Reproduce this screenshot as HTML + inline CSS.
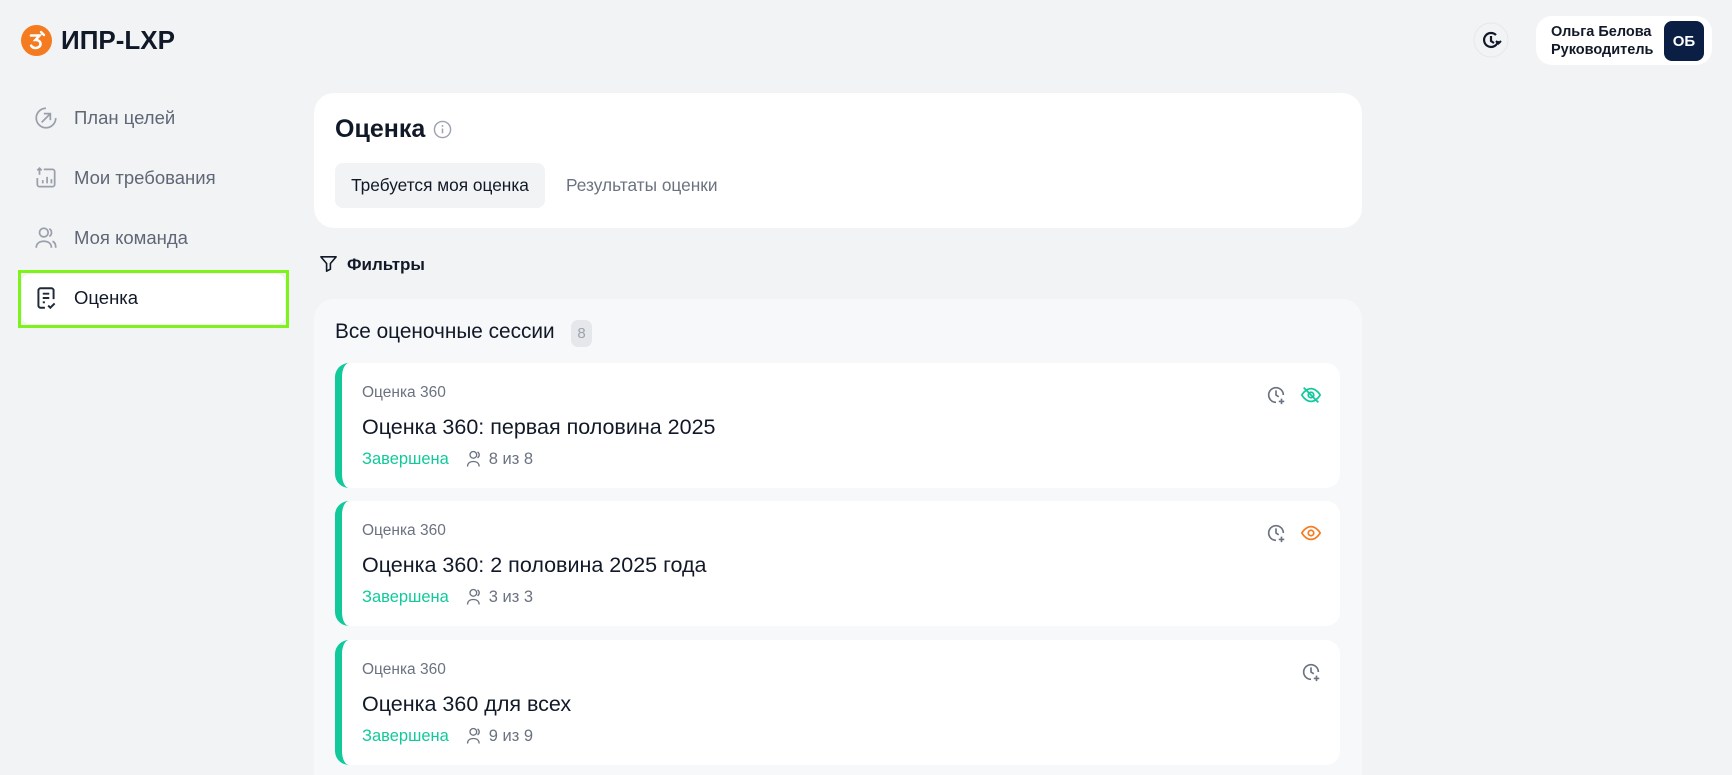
<!DOCTYPE html>
<html><head><meta charset="utf-8"><style>
*{box-sizing:border-box;margin:0;padding:0}
html{width:1732px;height:775px;overflow:hidden}
body{width:1732px;height:775px;overflow:hidden;background:#f2f3f5;font-family:"Liberation Sans","Noto Sans CJK SC",sans-serif;color:#111827;position:relative}
.abs{position:absolute}
.nav{position:absolute;left:33px;display:flex;align-items:center;font-size:18.5px;color:#5f6675}
.nav svg{width:26px;height:26px;margin-right:15px}
.card{position:absolute;left:335px;width:1005px;height:125px;background:#fff;border-radius:14px;border-left:7px solid #12c99b}
.card .k{position:absolute;left:20px;top:21px;font-size:15.5px;color:#6b7280}
.card .t{position:absolute;left:20px;top:52px;font-size:21.5px;color:#111827}
.card .s{position:absolute;left:20px;top:86px;font-size:16.5px;color:#12c99b;display:flex;align-items:center}
.card .s span{color:#6b7280;margin-left:6px}
</style></head><body>
<svg class="abs" style="left:21px;top:25px" width="31" height="31" viewBox="0 0 31 31"><circle cx="15.5" cy="15.5" r="15.5" fill="#f47b20"/><path d="M10 10.5h8.5l-4 4.5c3 0 5 1.6 5 4s-2.3 4-5 4c-2 0-3.5-1-4.3-2.3" fill="none" stroke="#fff" stroke-width="2.6" stroke-linecap="round"/><path d="M20 7l3 3" stroke="#fff" stroke-width="2.4" stroke-linecap="round"/></svg>
<div class="abs" style="left:61px;top:25px;font-size:26px;font-weight:600;color:#111827">ИПР-LXP</div>

<div class="nav" style="top:105px"><svg viewBox="0 0 24 24" fill="none" stroke="#9aa0ab" stroke-width="1.6"><path d="M21 12a9 9 0 1 1-9-9"/><path d="M8 16l8-8M10 8h6v6"/></svg>План целей</div>
<div class="nav" style="top:165px"><svg viewBox="0 0 24 24" fill="none" stroke="#9aa0ab" stroke-width="1.6"><path d="M6 3v6M4 5l2-2 2 2M10 4h8a2 2 0 0 1 2 2v12a2 2 0 0 1-2 2H6a2 2 0 0 1-2-2v-6M9 17v-3M13 17v-6M17 17v-4"/></svg>Мои требования</div>
<div class="nav" style="top:225px"><svg viewBox="0 0 24 24" fill="none" stroke="#9aa0ab" stroke-width="1.6"><circle cx="10" cy="7" r="4"/><path d="M3 21c0-4 3-6 7-6s7 2 7 6M15 3.5a4 4 0 0 1 0 7M18 15c2 .7 3 2.5 3 6"/></svg>Моя команда</div>
<div class="abs" style="left:18px;top:270px;width:271px;height:58px;border:3px solid #7df31a;background:#f2f3f5"><div style="position:absolute;inset:1px;background:#fff;border-radius:8px"></div></div>
<div class="nav" style="top:285px;color:#111827"><svg viewBox="0 0 24 24" fill="none" stroke="#1f2937" stroke-width="1.8"><path d="M11 21H7a2 2 0 0 1-2-2V5a2 2 0 0 1 2-2h10a2 2 0 0 1 2 2v8M9 8h6M9 12h6M9 16h2M14 19l2 2 4-4"/></svg>Оценка</div>

<svg class="abs" style="left:1473px;top:22px" width="36" height="36" viewBox="0 0 36 36"><circle cx="18" cy="18" r="17" fill="#f2f3f5" stroke="#e5e7eb"/><path d="M25 19a7 7 0 1 1-2-6" fill="none" stroke="#111827" stroke-width="2.2"/><path d="M18 14v5l3 2" fill="none" stroke="#111827" stroke-width="2.2"/><path d="M23 19l2.5 2.5 2.5-2.5" fill="none" stroke="#111827" stroke-width="2"/></svg>
<div class="abs" style="left:1536px;top:16px;width:176px;height:49px;background:#fff;border-radius:16px"></div>
<div class="abs" style="left:1551px;top:23px;font-size:14.5px;font-weight:600;line-height:18px;color:#111827">Ольга Белова<br>Руководитель</div>
<div class="abs" style="left:1664px;top:21px;width:40px;height:40px;background:#0b1f45;border-radius:8px;color:#fff;font-weight:700;font-size:15px;display:flex;align-items:center;justify-content:center">ОБ</div>

<div class="abs" style="left:314px;top:93px;width:1048px;height:135px;background:#fff;border-radius:20px"></div>
<div class="abs" style="left:335px;top:115px;font-size:25px;font-weight:700">Оценка</div>
<svg class="abs" style="left:433px;top:120px" width="19" height="19" viewBox="0 0 20 20"><circle cx="10" cy="10" r="8.5" fill="none" stroke="#9ca3af" stroke-width="1.5"/><path d="M10 9v5" stroke="#9ca3af" stroke-width="1.6"/><circle cx="10" cy="6.3" r="1" fill="#9ca3af"/></svg>
<div class="abs" style="left:335px;top:163px;width:210px;height:45px;background:#f2f3f5;border-radius:8px;font-size:17.3px;display:flex;align-items:center;justify-content:center;color:#111827">Требуется моя оценка</div>
<div class="abs" style="left:566px;top:175px;font-size:17.3px;color:#6b7280">Результаты оценки</div>

<svg class="abs" style="left:319px;top:254px" width="19" height="19" viewBox="0 0 20 20"><path d="M2 3h16l-6 7v6l-4 2v-8z" fill="none" stroke="#111827" stroke-width="1.7" stroke-linejoin="round"/></svg>
<div class="abs" style="left:347px;top:255px;font-size:17px;font-weight:600">Фильтры</div>

<div class="abs" style="left:314px;top:299px;width:1048px;height:476px;background:#f7f8fa;border-radius:20px 20px 0 0"></div>
<div class="abs" style="left:335px;top:320px;font-size:20.8px">Все оценочные сессии</div>
<div class="abs" style="left:571px;top:320px;width:21px;height:27px;background:#e5e7eb;border-radius:7px;font-size:15px;color:#9ca3af;display:flex;align-items:center;justify-content:center">8</div>

<div class="card" style="top:363px"><div class="k">Оценка 360</div><div class="t">Оценка 360: первая половина 2025</div><div class="s">Завершена<span style="display:flex;align-items:center;margin-left:16px"><svg width="20" height="20" viewBox="0 0 24 24" fill="none" stroke="#6b7280" stroke-width="1.6"><circle cx="10" cy="7" r="4"/><path d="M3 21c0-4 3-6 7-6s7 2 7 6M15 3.5a4 4 0 0 1 0 7"/></svg><span style="margin-left:4px">8 из 8</span></span></div></div>
<div class="card" style="top:501px"><div class="k">Оценка 360</div><div class="t">Оценка 360: 2 половина 2025 года</div><div class="s">Завершена<span style="display:flex;align-items:center;margin-left:16px"><svg width="20" height="20" viewBox="0 0 24 24" fill="none" stroke="#6b7280" stroke-width="1.6"><circle cx="10" cy="7" r="4"/><path d="M3 21c0-4 3-6 7-6s7 2 7 6M15 3.5a4 4 0 0 1 0 7"/></svg><span style="margin-left:4px">3 из 3</span></span></div></div>
<div class="card" style="top:640px"><div class="k">Оценка 360</div><div class="t">Оценка 360 для всех</div><div class="s">Завершена<span style="display:flex;align-items:center;margin-left:16px"><svg width="20" height="20" viewBox="0 0 24 24" fill="none" stroke="#6b7280" stroke-width="1.6"><circle cx="10" cy="7" r="4"/><path d="M3 21c0-4 3-6 7-6s7 2 7 6M15 3.5a4 4 0 0 1 0 7"/></svg><span style="margin-left:4px">9 из 9</span></span></div></div>

<svg class="abs" style="left:1265px;top:384px" width="22" height="22" viewBox="0 0 24 24" fill="none" stroke="#6b7280" stroke-width="1.8"><path d="M20 12a8 8 0 1 0-8 8"/><path d="M12 7v5l3 2M18 16v6M15 19h6"/></svg>
<svg class="abs" style="left:1300px;top:384px" width="22" height="22" viewBox="0 0 24 24" fill="none" stroke="#12c99b" stroke-width="1.9"><path d="M2 12s4-7 10-7 10 7 10 7-4 7-10 7S2 12 2 12z"/><circle cx="12" cy="12" r="3"/><path d="M4 4l16 16"/></svg>
<svg class="abs" style="left:1265px;top:522px" width="22" height="22" viewBox="0 0 24 24" fill="none" stroke="#6b7280" stroke-width="1.8"><path d="M20 12a8 8 0 1 0-8 8"/><path d="M12 7v5l3 2M18 16v6M15 19h6"/></svg>
<svg class="abs" style="left:1300px;top:522px" width="22" height="22" viewBox="0 0 24 24" fill="none" stroke="#f47b20" stroke-width="1.9"><path d="M2 12s4-7 10-7 10 7 10 7-4 7-10 7S2 12 2 12z"/><circle cx="12" cy="12" r="3"/></svg>
<svg class="abs" style="left:1300px;top:661px" width="22" height="22" viewBox="0 0 24 24" fill="none" stroke="#6b7280" stroke-width="1.8"><path d="M20 12a8 8 0 1 0-8 8"/><path d="M12 7v5l3 2M18 16v6M15 19h6"/></svg>
</body></html>
